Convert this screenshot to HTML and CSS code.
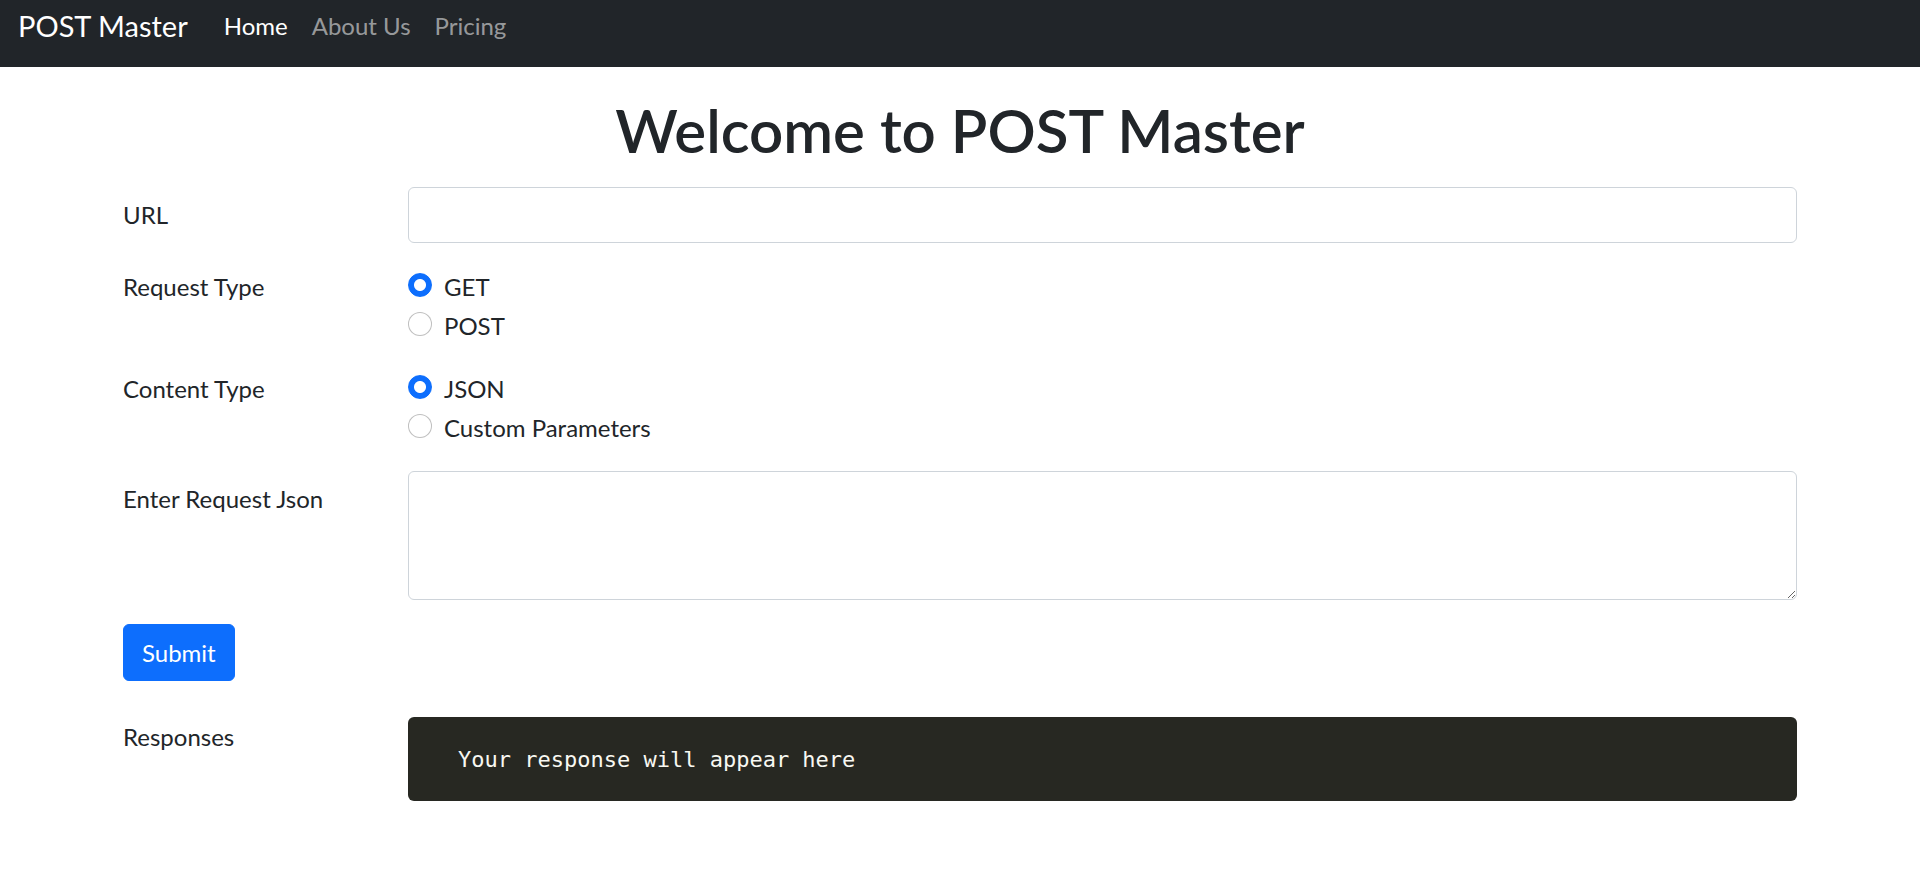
FILE: index.html
```html
<!DOCTYPE html>
<html lang="en">
<head>
<meta charset="utf-8">
<title>POST Master</title>
<link rel="stylesheet" href="styles.css">
</head>
<body>
<nav class="navbar">
  <a class="brand" href="#">POST Master</a>
  <ul class="nav">
    <li><a class="nav-link active" href="#">Home</a></li>
    <li><a class="nav-link" href="#">About Us</a></li>
    <li><a class="nav-link" href="#">Pricing</a></li>
  </ul>
</nav>
<main class="container">
  <h1 class="title">Welcome to POST Master</h1>
  <div class="row">
    <label class="col-label" for="url">URL</label>
    <input class="form-control" id="url" type="text">
  </div>
  <div class="row">
    <div class="col-label pt-0">Request Type</div>
    <div class="checks">
      <label class="form-check"><input class="radio" type="radio" name="req" checked><span>GET</span></label>
      <label class="form-check"><input class="radio" type="radio" name="req"><span>POST</span></label>
    </div>
  </div>
  <div class="row">
    <div class="col-label pt-0">Content Type</div>
    <div class="checks">
      <label class="form-check"><input class="radio" type="radio" name="ct" checked><span>JSON</span></label>
      <label class="form-check"><input class="radio" type="radio" name="ct"><span>Custom Parameters</span></label>
    </div>
  </div>
  <div class="row">
    <label class="col-label" for="json">Enter Request Json</label>
    <textarea class="form-control textarea" id="json" rows="3"></textarea>
  </div>
  <button class="btn" type="button">Submit</button>
  <div class="row">
    <div class="col-label pt-0">Responses</div>
    <pre class="response"><code>Your response will appear here</code></pre>
  </div>
</main>
</body>
</html>
```
FILE: styles.css
```css
* { box-sizing: border-box; }
html, body { margin: 0; }
body {
  font-family: Lato, "Open Sans", sans-serif;
  font-size: 24px;
  line-height: 1.5;
  color: #212529;
  background: #fff;
}
a { text-decoration: none; }

.navbar {
  height: 67px;
  background: #212529;
  display: flex;
  align-items: center;
  padding: 0 18px 16px;
}
.brand {
  font-size: 29px;
  line-height: 45px;
  color: #fff;
  margin-right: 24px;
}
.nav {
  list-style: none;
  display: flex;
  margin: 0;
  padding: 0;
}
.nav-link {
  display: block;
  padding: 0 12px;
  font-size: 24px;
  line-height: 36px;
  color: rgba(255, 255, 255, 0.55);
}
.nav-link.active { color: #fff; }

.container {
  width: 1710px;
  margin: 0 auto;
  padding: 0 18px;
}
.title {
  margin: 27px 0 21px;
  font-size: 60px;
  line-height: 72px;
  font-weight: 600;
  text-align: center;
}
.row {
  display: grid;
  grid-template-columns: 285px 1fr;
  align-items: start;
  margin-bottom: 24px;
}
.col-label {
  padding-top: 10px;
  line-height: 36px;
}
.col-label.pt-0 { padding-top: 2px; }

.form-control {
  display: block;
  width: 100%;
  height: 56px;
  padding: 9px 18px;
  font: inherit;
  line-height: 36px;
  color: #212529;
  background: #fff;
  border: 1px solid #ced4da;
  border-radius: 6px;
  outline: none;
}
.textarea {
  height: 129px;
  resize: vertical;
}

.checks { display: flex; flex-direction: column; }
.form-check {
  display: flex;
  align-items: flex-start;
  line-height: 36px;
  margin-bottom: 3px;
}
.form-check span {
  padding-top: 2px;
  margin-bottom: -2px;
}
.radio {
  -webkit-appearance: none;
  appearance: none;
  flex: none;
  width: 24px;
  height: 24px;
  margin: 6px 12px 0 0;
  border: 1px solid rgba(0, 0, 0, 0.25);
  border-radius: 50%;
  background: #fff;
}
.radio:checked {
  border-color: #0d6efd;
  background: radial-gradient(circle, #fff 0 5.5px, #0d6efd 6.5px);
}

.btn {
  display: block;
  height: 57px;
  padding: 0 18px;
  margin: 1px 0 36px;
  font: inherit;
  line-height: 36px;
  color: #fff;
  background: #0d6efd;
  border: 1px solid #0d6efd;
  border-radius: 6px;
}

.response {
  margin: 0;
  height: 84px;
  display: flex;
  align-items: center;
  padding: 0 0 0 50px;
  background: #272822;
  border-radius: 6px;
  color: #f8f8f2;
  font-family: "DejaVu Sans Mono", "Liberation Mono", monospace;
  font-size: 22px;
}
```
